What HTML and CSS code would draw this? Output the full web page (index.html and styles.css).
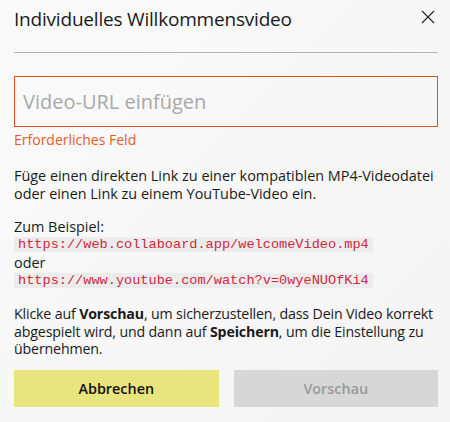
FILE: index.html
```html
<!DOCTYPE html>
<html lang="de">
  <head>
    <meta charset="UTF-8" />
    <meta name="viewport" content="width=device-width, initial-scale=1.0" />
    <title>Individuelles Willkommensvideo</title>
    <link rel="stylesheet" href="styles.css">
  </head>
  <body>
    <section class="dialog">
      <div class="dialog__header">
        <h1 class="dialog__title">Individuelles Willkommensvideo</h1>
        <button class="dialog__close" aria-label="Schließen">
          <svg width="14" height="14" viewBox="0 0 14 14">
            <path d="M1 1 L13 13 M13 1 L1 13" stroke="#222" stroke-width="1.1" fill="none" />
          </svg>
        </button>
      </div>
      <hr class="dialog__rule" />

      <div class="url-field">
        <input class="url-field__input" type="text" placeholder="Video-URL einfügen" />
      </div>
      <div class="url-field__error">Erforderliches Feld</div>

      <p class="hint">
        Füge einen direkten Link zu einer kompatiblen MP4-Videodatei
        oder einen Link zu einem YouTube-Video ein.
      </p>

      <div class="examples">
        <div class="examples__label">Zum Beispiel:</div>
        <code class="examples__code">https://web.collaboard.app/welcomeVideo.mp4</code>
        <div class="examples__label">oder</div>
        <code class="examples__code">https://www.youtube.com/watch?v=0wyeNUOfKi4</code>
      </div>

      <p class="hint hint--last">
        Klicke auf <strong>Vorschau</strong>, um sicherzustellen, dass Dein Video korrekt
        abgespielt wird, und dann auf <strong>Speichern</strong>, um die Einstellung zu
        übernehmen.
      </p>

      <div class="dialog__actions">
        <button class="btn btn--primary">Abbrechen</button>
        <button class="btn btn--disabled" disabled>Vorschau</button>
      </div>
    </section>
  </body>
</html>
```

FILE: styles.css
```css
* {
  box-sizing: border-box;
}
body {
  margin: 0;
  background: linear-gradient(135deg, #fafafa 0%, #f4f4f4 100%);
  font-family: "Open Sans", "Noto Sans", sans-serif;
  color: #1a1a1a;
  height: 422px;
  overflow: hidden;
}
.dialog {
  padding: 0 12px 0 14px;
}

.dialog__header {
  display: flex;
  justify-content: space-between;
  align-items: flex-start;
  height: 52px;
}
.dialog__title {
  margin: 0;
  padding-top: 5px;
  font-size: 19px;
  font-weight: 400;
  letter-spacing: -0.2px;
  line-height: 28px;
}
.dialog__close {
  border: none;
  background: none;
  padding: 0;
  margin: 10px 3px 0 0;
  width: 14px;
  height: 14px;
}
.dialog__rule {
  margin: 0;
  border: none;
  border-top: 1px solid #b4b4b4;
}

.url-field {
  margin-top: 23px;
}
.url-field__input {
  display: block;
  width: 100%;
  height: 51px;
  border: 1px solid #e4531f;
  background: transparent;
  padding: 0 8px;
  font-family: inherit;
  font-size: 20px;
  outline: none;
}
.url-field__input::placeholder {
  color: #a8a8a8;
}
.url-field__error {
  margin-top: 3px;
  color: #ea5a2a;
  font-size: 14px;
  line-height: 20px;
}

.hint {
  margin: 17px 0 0;
  font-size: 14.4px;
  line-height: 17.5px;
}
.hint--last {
  margin: 17px -10px 0 0;
  font-size: 14.2px;
  letter-spacing: -0.15px;
}

.examples {
  margin-top: 15px;
  font-size: 14.4px;
}
.examples__label {
  line-height: 19px;
}
.examples__code {
  display: block;
  width: max-content;
  height: 15px;
  margin: 1px 0;
  background: #ececec;
  color: #d0283c;
  font-family: "Liberation Mono", monospace;
  font-size: 13.6px;
  line-height: 15px;
  padding: 0 4px;
}

.dialog__actions {
  display: flex;
  gap: 15px;
  margin-top: 12px;
}
.btn {
  flex: 1;
  height: 37px;
  border: none;
  font-family: inherit;
  font-size: 14.4px;
}
.btn--primary {
  background: #e8e57f;
  color: #111;
  font-weight: 600;
}
.btn--disabled {
  background: #d7d7d7;
  color: #9a9a9a;
  font-weight: 600;
}
```
